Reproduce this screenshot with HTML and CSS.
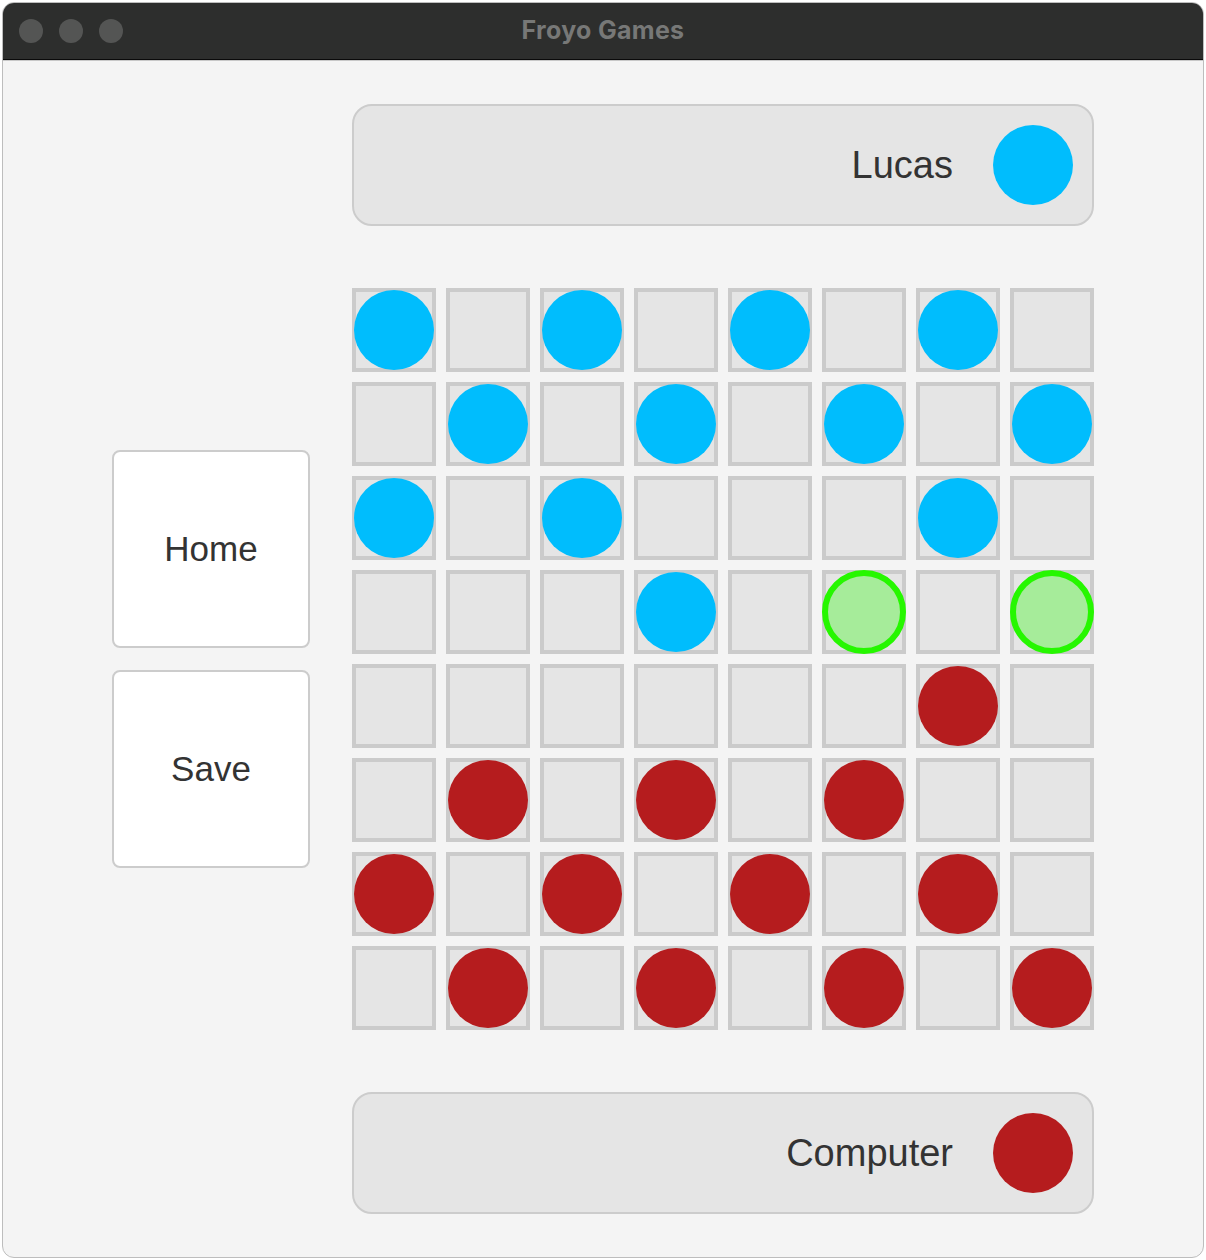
FILE: index.html
```html
<!DOCTYPE html>
<html>
<head>
<meta charset="utf-8">
<title>Froyo Games</title>
<link rel="stylesheet" href="styles.css">
</head>
<body>
<div class="window">
  <div class="titlebar">
    <div class="lights"><span class="light"></span><span class="light"></span><span class="light"></span></div>
    <div class="title">Froyo Games</div>
  </div>
  <div class="content">
    <div class="side">
      <button class="btn">Home</button>
      <button class="btn">Save</button>
    </div>
    <div class="main">
      <div class="panel"><span class="name">Lucas</span><span class="dot blue"></span></div>
      <div class="board">
        <div class="cell"><div class="piece blue"></div></div><div class="cell"></div><div class="cell"><div class="piece blue"></div></div><div class="cell"></div><div class="cell"><div class="piece blue"></div></div><div class="cell"></div><div class="cell"><div class="piece blue"></div></div><div class="cell"></div>
        <div class="cell"></div><div class="cell"><div class="piece blue"></div></div><div class="cell"></div><div class="cell"><div class="piece blue"></div></div><div class="cell"></div><div class="cell"><div class="piece blue"></div></div><div class="cell"></div><div class="cell"><div class="piece blue"></div></div>
        <div class="cell"><div class="piece blue"></div></div><div class="cell"></div><div class="cell"><div class="piece blue"></div></div><div class="cell"></div><div class="cell"></div><div class="cell"></div><div class="cell"><div class="piece blue"></div></div><div class="cell"></div>
        <div class="cell"></div><div class="cell"></div><div class="cell"></div><div class="cell"><div class="piece blue"></div></div><div class="cell"></div><div class="cell"><div class="hint"></div></div><div class="cell"></div><div class="cell"><div class="hint"></div></div>
        <div class="cell"></div><div class="cell"></div><div class="cell"></div><div class="cell"></div><div class="cell"></div><div class="cell"></div><div class="cell"><div class="piece red"></div></div><div class="cell"></div>
        <div class="cell"></div><div class="cell"><div class="piece red"></div></div><div class="cell"></div><div class="cell"><div class="piece red"></div></div><div class="cell"></div><div class="cell"><div class="piece red"></div></div><div class="cell"></div><div class="cell"></div>
        <div class="cell"><div class="piece red"></div></div><div class="cell"></div><div class="cell"><div class="piece red"></div></div><div class="cell"></div><div class="cell"><div class="piece red"></div></div><div class="cell"></div><div class="cell"><div class="piece red"></div></div><div class="cell"></div>
        <div class="cell"></div><div class="cell"><div class="piece red"></div></div><div class="cell"></div><div class="cell"><div class="piece red"></div></div><div class="cell"></div><div class="cell"><div class="piece red"></div></div><div class="cell"></div><div class="cell"><div class="piece red"></div></div>
      </div>
      <div class="panel"><span class="name">Computer</span><span class="dot red"></span></div>
    </div>
  </div>
</div>
</body>
</html>
```

FILE: styles.css
```css
* { box-sizing: border-box; }
html, body { margin: 0; padding: 0; background: #ffffff; }
body { font-family: "Liberation Sans", Arial, sans-serif; }

.window {
  margin: 2px;
  width: 1202px;
  height: 1256px;
  border: 1px solid #bdbdbd;
  border-radius: 12px;
  overflow: hidden;
  background: #f4f4f4;
}

.titlebar {
  position: relative;
  height: 57px;
  background: #2d2e2d;
  border-bottom: 1px solid #0a0a0a;
  display: flex;
  align-items: center;
  padding-left: 16px;
}
.lights { display: flex; gap: 16px; }
.light {
  width: 24px;
  height: 24px;
  border-radius: 50%;
  background: #545554;
}
.title {
  position: absolute;
  left: 0;
  right: 0;
  top: 0;
  line-height: 55px;
  text-align: center;
  font-family: Inter, "Liberation Sans", sans-serif;
  font-weight: 700;
  font-size: 25px;
  letter-spacing: 0.3px;
  color: #777877;
}

.content {
  height: 1198px;
  border-top: 1px solid #c8c8c8;
  display: flex;
  padding: 43px 0 44px 109px;
}

.side {
  width: 198px;
  margin-right: 42px;
  display: flex;
  flex-direction: column;
  justify-content: center;
  gap: 22px;
}
.btn {
  width: 198px;
  height: 198px;
  background: #ffffff;
  border: 2px solid #cccccc;
  border-radius: 8px;
  font-family: "Liberation Sans", Arial, sans-serif;
  font-size: 35px;
  color: #333333;
  padding: 0;
}

.main {
  width: 742px;
  display: flex;
  flex-direction: column;
  gap: 62px;
}

.panel {
  height: 122px;
  background: #e5e5e5;
  border: 2px solid #cccccc;
  border-radius: 20px;
  display: flex;
  align-items: center;
  justify-content: flex-end;
  gap: 40px;
  padding-right: 19px;
}
.name {
  font-size: 38px;
  color: #333333;
}
.dot {
  width: 80px;
  height: 80px;
  border-radius: 50%;
}

.board {
  display: grid;
  grid-template-columns: repeat(8, 84px);
  grid-auto-rows: 84px;
  gap: 10px;
}
.cell {
  width: 84px;
  height: 84px;
  background: #e5e5e5;
  border: 4px solid #cbcbcb;
}
.piece {
  width: 80px;
  height: 80px;
  margin: -2px;
  border-radius: 50%;
}
.hint {
  width: 84px;
  height: 84px;
  margin: -4px;
  border-radius: 50%;
  border: 6px solid #26f700;
  background: #a6ec9a;
}
.blue { background: #00bdfd; }
.red { background: #b51c1e; }
```
